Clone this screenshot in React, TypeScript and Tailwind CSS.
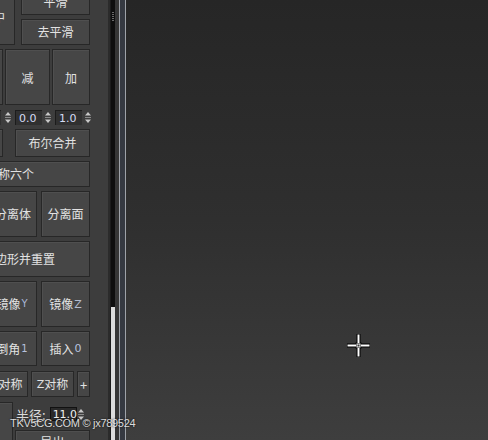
import React from "react";

const cjk = { fontFamily: '"Noto Sans CJK SC", "Noto Sans", sans-serif' };

function Btn({ className = "", children }: { className?: string; children?: React.ReactNode }) {
  return (
    <div
      className={`shrink-0 flex items-center justify-center bg-[#464646] border border-[#272727] shadow-[inset_1px_1px_0_#4f4f4f] text-[#e2e2e2] text-[12px] leading-none whitespace-nowrap overflow-hidden ${className}`}
    >
      {children}
    </div>
  );
}

function Arrows() {
  return (
    <svg width="8" height="15" viewBox="0 0 8 15" className="shrink-0">
      <path d="M4 2 L7 5.5 L1 5.5 Z" fill="#c8c8c8" />
      <line x1="1" y1="7.5" x2="7" y2="7.5" stroke="#8a8a8a" strokeWidth="1" />
      <path d="M4 13 L7 9.5 L1 9.5 Z" fill="#c8c8c8" />
    </svg>
  );
}

function Field({ className = "", children }: { className?: string; children?: React.ReactNode }) {
  return (
    <div
      className={`shrink-0 h-full flex items-center pl-[3px] bg-[#303030] border-t border-l border-[#1c1c1c] text-[#d4dcf4] text-[11px] leading-none ${className}`}
      style={{ fontFamily: '"DejaVu Sans", sans-serif' }}
    >
      {children}
    </div>
  );
}

const latin = { fontFamily: '"DejaVu Sans", sans-serif' };

export default function App() {
  return (
    <div className="relative w-[488px] h-[440px] flex overflow-hidden bg-[#2a2a2a]" style={cjk}>
      {/* Command panel */}
      <div className="w-[108px] h-full shrink-0 bg-[#3d3d3d] overflow-hidden">
        <div className="w-[90px] flex flex-col">
          {/* row 1 */}
          <div className="flex justify-end gap-[6px] h-[56px] -mt-[11px]">
            <Btn className="w-[40px] h-full justify-end pr-[9px]">中</Btn>
            <div className="w-[69px] shrink-0 flex flex-col gap-[4px]">
              <Btn className="w-full h-[26px]">平滑</Btn>
              <Btn className="w-full h-[26px]">去平滑</Btn>
            </div>
          </div>
          {/* row 2 */}
          <div className="flex justify-end gap-[2px] h-[56px] mt-[4px]">
            <Btn className="w-[30px] h-full" />
            <Btn className="w-[45px] h-full pt-[2px]">减</Btn>
            <Btn className="w-[38px] h-full pt-[2px]">加</Btn>
          </div>
          {/* row 3 spinners */}
          <div className="flex justify-end items-center h-[15px] mt-[5px] -mr-[2px]">
            <Field className="w-[20px]" />
            <div className="w-[3px] shrink-0" />
            <Arrows />
            <div className="w-[3px] shrink-0" />
            <Field className="w-[27px]">0.0</Field>
            <div className="w-[2px] shrink-0" />
            <Arrows />
            <div className="w-[3px] shrink-0" />
            <Field className="w-[27px]">1.0</Field>
            <div className="w-[2px] shrink-0" />
            <Arrows />
          </div>
          {/* row 4 */}
          <div className="flex justify-end gap-[12px] h-[28px] mt-[4px]">
            <Btn className="w-[30px] h-full" />
            <Btn className="w-[75px] h-full">布尔合并</Btn>
          </div>
          {/* row 5 */}
          <div className="flex justify-end h-[26px] mt-[4px]">
            <Btn className="w-[160px] h-full">对称六个</Btn>
          </div>
          {/* row 6 */}
          <div className="flex justify-end gap-[4px] h-[46px] mt-[4px]">
            <Btn className="w-[48px] h-full">分离体</Btn>
            <Btn className="w-[49px] h-full">分离面</Btn>
          </div>
          {/* row 7 */}
          <div className="flex justify-end h-[36px] mt-[4px]">
            <Btn className="w-[142px] h-full">多边形并重置</Btn>
          </div>
          {/* row 8 */}
          <div className="flex justify-end gap-[4px] h-[46px] mt-[4px]">
            <Btn className="w-[50px] h-full">
              镜像<span className="text-[10px] text-[#a9b6d6] ml-[1px]" style={latin}>Y</span>
            </Btn>
            <Btn className="w-[49px] h-full">
              镜像<span className="text-[11px] text-[#b4bccf] ml-[1px]" style={latin}>Z</span>
            </Btn>
          </div>
          {/* row 9 */}
          <div className="flex justify-end gap-[4px] h-[35px] mt-[4px]">
            <Btn className="w-[50px] h-full">
              倒角<span className="text-[10px] text-[#b7c2de] ml-[1px]" style={latin}>1</span>
            </Btn>
            <Btn className="w-[49px] h-full">
              插入<span className="text-[11px] text-[#b7c2de] ml-[1px]" style={latin}>0</span>
            </Btn>
          </div>
          {/* row 10 */}
          <div className="flex justify-end gap-[3px] h-[26px] mt-[5px]">
            <Btn className="w-[42px] h-full">X对称</Btn>
            <Btn className="w-[43px] h-full">
              <span style={latin} className="text-[11px]">Z</span>对称
            </Btn>
            <Btn className="w-[13px] h-full text-[#b8c4e0] text-[13px]">+</Btn>
          </div>
          {/* row 11 */}
          <div className="flex justify-end gap-[2px] h-[60px] mt-[5px]">
            <Btn className="w-[30px] h-full" />
            <div className="w-[75px] shrink-0 flex flex-col">
              <div className="flex items-center h-[24px]">
                <span className="text-[13px] text-[#dcdcdc] leading-none ml-[1px]">半径:</span>
                <div className="w-[4px] shrink-0" />
                <div
                  className="w-[27px] h-[14px] shrink-0 flex items-center pl-[2px] bg-[#2a2a2a] border border-[#111] text-[#f0f0f0] text-[11px] leading-none"
                  style={latin}
                >
                  11.0
                </div>
                <Arrows />
              </div>
              <div className="h-[4px]" />
              <Btn className="w-full h-[26px] items-start pt-[5px]">导出</Btn>
            </div>
          </div>
        </div>
      </div>

      {/* separator / scrollbar strips */}
      <div className="w-[2px] h-full shrink-0 bg-[#2b2b2b]" />
      <div className="w-[1px] h-full shrink-0 bg-[#1c1c1c]" />
      <div className="w-[4px] h-full shrink-0 bg-[#0e0e0e] flex flex-col">
        <div className="flex flex-col gap-[1px] items-center pt-[12px]">
          <div className="w-[2px] h-[1px] bg-[#6a6a6a]" />
          <div className="w-[2px] h-[1px] bg-[#6a6a6a]" />
          <div className="w-[2px] h-[1px] bg-[#6a6a6a]" />
          <div className="w-[2px] h-[1px] bg-[#6a6a6a]" />
          <div className="w-[2px] h-[1px] bg-[#6a6a6a]" />
        </div>
        <div className="flex-1" />
        <div className="h-[133px] bg-[#dcdcdc]" />
      </div>
      <div className="w-[4px] h-full shrink-0 bg-[#363636]" />
      <div className="w-[1px] h-full shrink-0 bg-[#9ea2a8]" />
      <div className="w-[5px] h-full shrink-0 bg-[#353941]" />
      <div className="w-[1px] h-full shrink-0 bg-[#9ea2a8]" />

      {/* viewport */}
      <div className="flex-1 h-full bg-gradient-to-b from-[#262626] via-[#2f2f2f] to-[#3e3e3e]" />

      {/* watermark */}
      <div
        className="absolute left-[10px] top-[418px] text-[11px] tracking-[-0.3px] leading-none text-[#ececec] opacity-90 [text-shadow:0_0_2px_#000]"
        style={{ fontFamily: '"Liberation Sans", Arial, sans-serif' }}
      >
        TKV5CG.COM © jx789524
      </div>

      {/* crosshair cursor */}
      <svg className="absolute left-[346px] top-[333px]" width="25" height="25" viewBox="0 0 25 25">
        <g stroke="#000" strokeWidth="4" fill="none">
          <line x1="1" y1="12.5" x2="10" y2="12.5" />
          <line x1="15" y1="12.5" x2="24" y2="12.5" />
          <line x1="12.5" y1="1" x2="12.5" y2="10" />
          <line x1="12.5" y1="15" x2="12.5" y2="24" />
          <rect x="10.5" y="10.5" width="4" height="4" strokeWidth="2" />
        </g>
        <g stroke="#fff" strokeWidth="2" fill="none">
          <line x1="1.5" y1="12.5" x2="10" y2="12.5" />
          <line x1="15" y1="12.5" x2="23.5" y2="12.5" />
          <line x1="12.5" y1="1.5" x2="12.5" y2="10" />
          <line x1="12.5" y1="15" x2="12.5" y2="23.5" />
          <rect x="11" y="11" width="3" height="3" strokeWidth="1" />
        </g>
      </svg>
    </div>
  );
}
